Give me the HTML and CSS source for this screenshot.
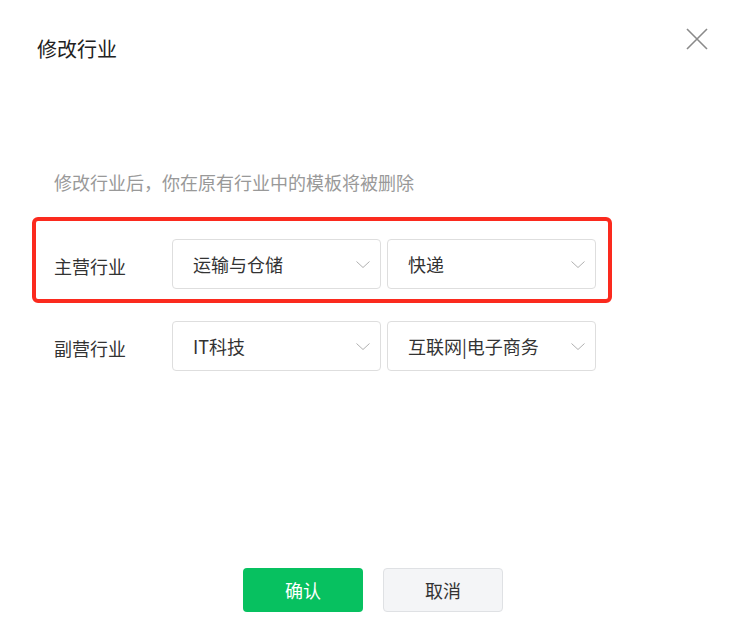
FILE: index.html
```html
<!doctype html>
<html lang="zh-CN">
  <head>
    <meta charset="UTF-8" />
    <meta name="viewport" content="width=device-width, initial-scale=1.0" />
    <title>修改行业</title>
    <link rel="stylesheet" href="styles.css">
  </head>
  <body>
    <div class="dialog">
      <div class="dialog-header">
        <h1 class="dialog-title">修改行业</h1>
        <button class="close-btn" aria-label="关闭">
          <svg width="22" height="22" viewBox="0 0 22 22">
            <path d="M1 1 L21 21 M21 1 L1 21" stroke="#8a8a8a" stroke-width="1.6" fill="none" />
          </svg>
        </button>
      </div>

      <p class="hint">修改行业后，你在原有行业中的模板将被删除</p>

      <div class="form">
        <div class="form-row">
          <div class="form-label">主营行业</div>
          <div class="select">
            <span>运输与仓储</span>
            <svg class="arrow" width="14" height="7" viewBox="0 0 14 7"><path d="M0.5 0.5 L7 6.5 L13.5 0.5" /></svg>
          </div>
          <div class="select">
            <span>快递</span>
            <svg class="arrow" width="14" height="7" viewBox="0 0 14 7"><path d="M0.5 0.5 L7 6.5 L13.5 0.5" /></svg>
          </div>
          <!-- 注目枠 -->
          <div class="highlight"></div>
        </div>
        <div class="form-row">
          <div class="form-label">副营行业</div>
          <div class="select">
            <span>IT科技</span>
            <svg class="arrow" width="14" height="7" viewBox="0 0 14 7"><path d="M0.5 0.5 L7 6.5 L13.5 0.5" /></svg>
          </div>
          <div class="select">
            <span>互联网|电子商务</span>
            <svg class="arrow" width="14" height="7" viewBox="0 0 14 7"><path d="M0.5 0.5 L7 6.5 L13.5 0.5" /></svg>
          </div>
        </div>
      </div>

      <div class="dialog-footer">
        <button class="btn btn-primary">确认</button>
        <button class="btn btn-default">取消</button>
      </div>
    </div>
  </body>
</html>
```

FILE: styles.css
```css
body {
  font-family: "Noto Sans CJK SC", "Noto Sans", sans-serif;
  margin: 0;
  background: #fff;
  color: #333;
}
.dialog {
  width: 746px;
  height: 634px;
  display: flex;
  flex-direction: column;
  box-sizing: border-box;
}
.dialog-header {
  display: flex;
  justify-content: space-between;
  align-items: flex-start;
  padding: 28px 38px 0 37px;
}
.dialog-title {
  margin: 9px 0 0;
  font-size: 20px;
  line-height: 24px;
  font-weight: normal;
  color: #222;
}
.close-btn {
  width: 22px;
  height: 22px;
  padding: 0;
  border: none;
  background: none;
  cursor: pointer;
}
.close-btn svg {
  display: block;
}
.hint {
  margin: 109px 0 0 54px;
  font-size: 18px;
  line-height: 24px;
  color: #999;
}
.form {
  margin-top: 45px;
  padding-left: 54px;
  display: flex;
  flex-direction: column;
  gap: 32px;
}
.form-row {
  position: relative;
  display: flex;
  align-items: center;
  width: 542px;
}
.form-label {
  flex: none;
  width: 118px;
  font-size: 18px;
  line-height: 24px;
  color: #333;
  padding-top: 3px;
}
.select {
  flex: none;
  width: 209px;
  height: 50px;
  box-sizing: border-box;
  border: 1px solid #dedede;
  border-radius: 4px;
  padding: 0 10px 0 20px;
  display: flex;
  align-items: center;
  justify-content: space-between;
  font-size: 18px;
  color: #333;
}
.select + .select {
  margin-left: 6px;
}
.arrow path {
  fill: none;
  stroke: #b0b0b0;
  stroke-width: 1;
}
.highlight {
  position: absolute;
  left: -22px;
  right: -16px;
  top: -22px;
  bottom: -14px;
  border: 4px solid #fb2a1e;
  border-radius: 6px;
  pointer-events: none;
}
.dialog-footer {
  margin-top: auto;
  padding-bottom: 22px;
  display: flex;
  justify-content: center;
  gap: 20px;
}
.btn {
  width: 120px;
  height: 44px;
  border-radius: 4px;
  font-family: inherit;
  font-size: 18px;
  cursor: pointer;
}
.btn-primary {
  background: #07c160;
  border: none;
  color: #fff;
}
.btn-default {
  background: #f4f5f7;
  border: 1px solid #dfe1e4;
  color: #333;
}
```
